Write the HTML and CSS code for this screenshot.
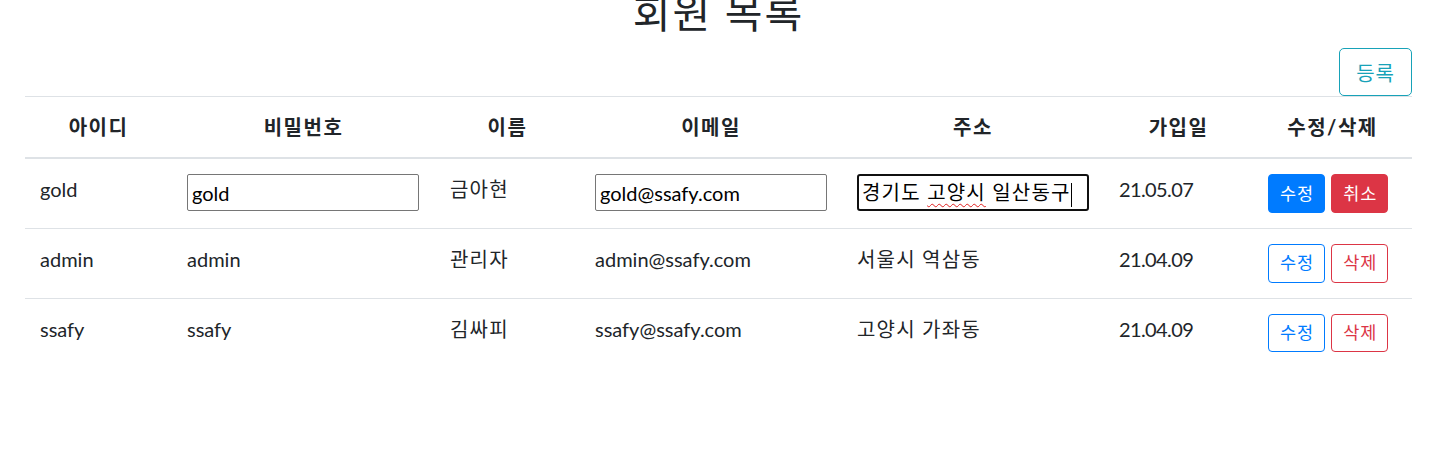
FILE: index.html
```html
<!DOCTYPE html>
<html lang="ko">
<head>
<meta charset="utf-8">
<title>회원 목록</title>
<link rel="stylesheet" href="styles.css">
</head>
<body>
<div class="page">
  <h1 class="title">회원 목록</h1>
  <div class="toolbar">
    <button class="btn btn-outline-info ko">등록</button>
  </div>
  <table class="table">
    <colgroup>
      <col class="c-id"><col class="c-pw"><col class="c-name"><col class="c-mail"><col class="c-addr"><col class="c-date"><col class="c-act">
    </colgroup>
    <thead>
      <tr>
        <th>아이디</th><th>비밀번호</th><th>이름</th><th>이메일</th><th>주소</th><th>가입일</th><th>수정/삭제</th>
      </tr>
    </thead>
    <tbody>
      <tr>
        <td>gold</td>
        <td><input class="field" type="text" value="gold"></td>
        <td class="ko">금아현</td>
        <td><input class="field" type="text" value="gold@ssafy.com"></td>
        <td><div class="field field-focus ko">경기도 <span class="misspell">고양시</span> 일산동구<span class="caret"></span></div></td>
        <td class="num">21.05.07</td>
        <td><div class="actions"><button class="btn btn-sm btn-primary">수정</button><button class="btn btn-sm btn-danger">취소</button></div></td>
      </tr>
      <tr>
        <td>admin</td>
        <td>admin</td>
        <td class="ko">관리자</td>
        <td>admin@ssafy.com</td>
        <td class="ko">서울시 역삼동</td>
        <td class="num">21.04.09</td>
        <td><div class="actions"><button class="btn btn-sm btn-outline-primary">수정</button><button class="btn btn-sm btn-outline-danger">삭제</button></div></td>
      </tr>
      <tr>
        <td>ssafy</td>
        <td>ssafy</td>
        <td class="ko">김싸피</td>
        <td>ssafy@ssafy.com</td>
        <td class="ko">고양시 가좌동</td>
        <td class="num">21.04.09</td>
        <td><div class="actions"><button class="btn btn-sm btn-outline-primary">수정</button><button class="btn btn-sm btn-outline-danger">삭제</button></div></td>
      </tr>
    </tbody>
  </table>
</div>
</body>
</html>
```

FILE: styles.css
```css
* { box-sizing: border-box; }

html, body {
  margin: 0;
  padding: 0;
  background: #fff;
}

body {
  font-family: Lato, "Noto Sans CJK KR", sans-serif;
  font-size: 20px;
  line-height: 30px;
  color: #212529;
  overflow: hidden;
}

.ko {
  letter-spacing: 1.2px;
}

.num {
  letter-spacing: -0.6px;
}

.page {
  margin: 0 36px 0 25px;
}

.title {
  margin: -11px 0 0;
  font-size: 41px;
  line-height: 48px;
  font-weight: 400;
  letter-spacing: 2px;
  text-align: center;
  color: #212529;
}

.toolbar {
  display: flex;
  justify-content: flex-end;
  padding-top: 11px;
}

.btn {
  font-family: inherit;
  display: inline-flex;
  align-items: center;
  justify-content: center;
  border: 1px solid transparent;
  background: transparent;
  cursor: pointer;
  letter-spacing: 1px;
}

.btn-outline-info {
  color: #17a2b8;
  border-color: #17a2b8;
  font-size: 20px;
  height: 48px;
  padding: 0 16px;
  border-radius: 5px;
}

.btn-sm {
  font-size: 17.5px;
  height: 38.75px;
  padding: 0 10px 0 11px;
  border-radius: 4px;
  line-height: 1;
}

.btn-primary { background: #007bff; border-color: #007bff; color: #fff; }
.btn-danger { background: #dc3545; border-color: #dc3545; color: #fff; }
.btn-outline-primary { color: #007bff; border-color: #007bff; }
.btn-outline-danger { color: #dc3545; border-color: #dc3545; }

.table {
  width: 100%;
  border-collapse: collapse;
  table-layout: fixed;
}

.c-id { width: 147px; }
.c-pw { width: 263px; }
.c-name { width: 145px; }
.c-mail { width: 262px; }
.c-addr { width: 262px; }
.c-date { width: 149px; }
.c-act { width: 159px; }

.table th,
.table td {
  padding: 15px;
  border-top: 1px solid #dee2e6;
  vertical-align: top;
  text-align: left;
  white-space: nowrap;
}

.table th {
  text-align: center;
  font-weight: 700;
  letter-spacing: 1.5px;
  border-bottom: 2px solid #dee2e6;
}

.table tbody tr:first-child td {
  border-top: none;
}

.field {
  display: block;
  width: 232px;
  height: 37px;
  margin: 0;
  padding: 0 4px;
  font-family: inherit;
  font-size: 20px;
  color: #000;
  border: 1px solid #767676;
  border-radius: 2px;
  background: #fff;
  line-height: 35px;
}

.field-focus {
  border: 2px solid #101010;
  border-radius: 3px;
  line-height: 33px;
  padding: 0 3px;
}

.misspell {
  text-decoration: underline wavy #e02020;
  text-decoration-thickness: 1px;
  text-underline-offset: 3px;
}

.caret {
  display: inline-block;
  width: 1px;
  height: 24px;
  background: #000;
  vertical-align: middle;
  margin-left: 0;
}

.actions {
  display: flex;
  gap: 6px;
}
```
